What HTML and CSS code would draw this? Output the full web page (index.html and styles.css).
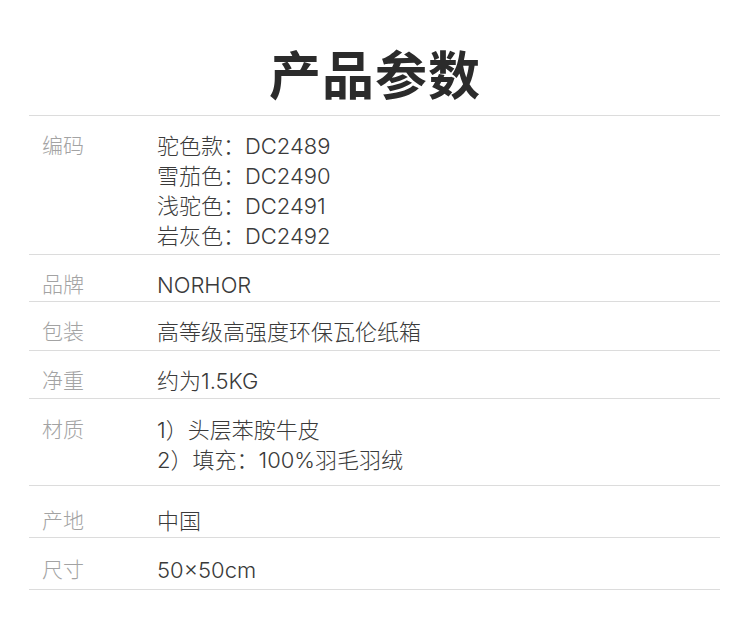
FILE: index.html
```html
<!DOCTYPE html>
<html lang="zh-CN">
<head>
<meta charset="utf-8">
<title>产品参数</title>
<link rel="stylesheet" href="styles.css">
</head>
<body>
<div class="page">
  <h1 class="title">产品参数</h1>
  <div class="table">
    <div class="row r1">
      <div class="label">编码</div>
      <div class="value">驼色款：DC2489<br>雪茄色：DC2490<br>浅驼色：DC2491<br>岩灰色：DC2492</div>
    </div>
    <div class="row r2">
      <div class="label">品牌</div>
      <div class="value">NORHOR</div>
    </div>
    <div class="row r3">
      <div class="label">包装</div>
      <div class="value">高等级高强度环保瓦伦纸箱</div>
    </div>
    <div class="row r4">
      <div class="label">净重</div>
      <div class="value">约为1.5KG</div>
    </div>
    <div class="row r5">
      <div class="label">材质</div>
      <div class="value">1）头层苯胺牛皮<br>2）填充：100%羽毛羽绒</div>
    </div>
    <div class="row r6">
      <div class="label">产地</div>
      <div class="value">中国</div>
    </div>
    <div class="row r7">
      <div class="label">尺寸</div>
      <div class="value">50×50cm</div>
    </div>
  </div>
</div>
</body>
</html>
```
FILE: styles.css
```css
html, body {
  margin: 0;
  padding: 0;
  background: #ffffff;
}
body {
  font-family: "Inter", "Noto Sans CJK SC", sans-serif;
  color: #333333;
}
.page {
  width: 750px;
  height: 639px;
  overflow: hidden;
}
.title {
  margin: 0;
  padding-top: 40px;
  height: 115px;
  box-sizing: border-box;
  text-align: center;
  font-family: "Noto Sans CJK SC", sans-serif;
  font-size: 52px;
  line-height: 66px;
  font-weight: 700;
  color: #2b2b2b;
  letter-spacing: 1px;
}
.table {
  margin: 0 30px 0 29px;
  border-top: 1px solid #dcdcdc;
}
.row {
  display: flex;
  border-bottom: 1px solid #dcdcdc;
  padding-top: 15px;
  padding-bottom: 1px;
}
.label {
  width: 115px;
  padding-left: 13px;
  flex: none;
  font-size: 21px;
  line-height: 30px;
  color: #a3a3a3;
  font-weight: 300;
}
.value {
  font-size: 22px;
  line-height: 30px;
  color: #3a3a3a;
  font-weight: 300;
}
.r1 { padding-bottom: 3px; }
.r2 { padding-bottom: 1px; }
.r3 { padding-bottom: 3px; }
.r4 { padding-bottom: 2px; }
.r5 { padding-bottom: 10px; padding-top: 16px; }
.r6 { padding-top: 20px; padding-bottom: 1px; }
.r7 { padding-top: 17px; padding-bottom: 4px; }
```
